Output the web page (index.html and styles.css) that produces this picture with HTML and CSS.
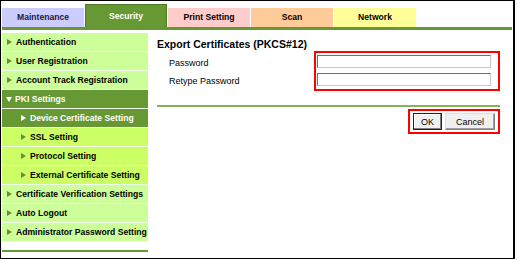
FILE: index.html
```html
<!DOCTYPE html>
<html lang="en">
<head>
  <meta charset="UTF-8" />
  <title>Export Certificates (PKCS#12)</title>
  <link rel="stylesheet" href="styles.css">
</head>
<body>
  <div class="frame">
    <div class="tabs">
      <div class="tab tab-maint">Maintenance</div>
      <div class="tab tab-security active">Security</div>
      <div class="tab tab-print">Print Setting</div>
      <div class="tab tab-scan">Scan</div>
      <div class="tab tab-network">Network</div>
    </div>
    <div class="tab-line"></div>

    <div class="content">
      <div class="side">
        <ul class="menu">
          <li class="item"><span class="arrow"></span>Authentication</li>
          <li class="item"><span class="arrow"></span>User Registration</li>
          <li class="item"><span class="arrow"></span>Account Track Registration</li>
          <li class="item open"><span class="arrow down"></span>PKI Settings</li>
          <li class="item sub current"><span class="arrow"></span>Device Certificate Setting</li>
          <li class="item sub"><span class="arrow"></span>SSL Setting</li>
          <li class="item sub"><span class="arrow"></span>Protocol Setting</li>
          <li class="item sub"><span class="arrow"></span>External Certificate Setting</li>
          <li class="item"><span class="arrow"></span>Certificate Verification Settings</li>
          <li class="item"><span class="arrow"></span>Auto Logout</li>
          <li class="item"><span class="arrow"></span>Administrator Password Setting</li>
        </ul>
        <div class="side-line"></div>
      </div>

      <div class="main">
        <h2>Export Certificates (PKCS#12)</h2>
        <div class="form-rows">
          <div class="labels">
            <label for="pw">Password</label>
            <label for="pw2">Retype Password</label>
          </div>
          <div class="highlight inputs">
            <input type="password" id="pw" />
            <input type="password" id="pw2" />
          </div>
        </div>
        <div class="main-line"></div>
        <div class="actions">
          <div class="highlight buttons">
            <button type="button" class="btn btn-ok">OK</button>
            <button type="button" class="btn btn-cancel">Cancel</button>
          </div>
        </div>
      </div>
    </div>
  </div>
</body>
</html>
```
FILE: styles.css
```css
body {
  margin: 0;
  background-color: #ffffff;
  font-family: 'Liberation Sans', Arial, sans-serif;
  color: #000;
}

.frame {
  box-sizing: border-box;
  width: 515px;
  height: 259px;
  border: 1px solid #000;
  border-right-width: 2px;
  padding-left: 1px;
  overflow: hidden;
}

/* tabs */
.tabs {
  display: flex;
  align-items: flex-end;
  height: 25px;
  padding-top: 1px;
}

.tab {
  box-sizing: border-box;
  width: 82px;
  height: 19px;
  margin-right: 1px;
  font-size: 8.6px;
  font-weight: bold;
  text-align: center;
  line-height: 19px;
  color: #000;
}

.tab-maint { background-color: #ccccff; color: #1a1a40; }
.tab-print { background-color: #ffcccc; }
.tab-scan { background-color: #ffcc99; }
.tab-network { background-color: #ffff99; }

.tab-security.active {
  height: 23px;
  line-height: 23px;
  background-color: #669933;
  border: 1px solid #4d7a26;
  border-bottom: none;
  color: #fff;
}

.tab-line {
  height: 3px;
  margin-right: 1px;
  background-color: #669933;
}

/* layout */
.content {
  display: flex;
  padding-top: 3px;
}

.side {
  width: 146px;
}

.menu {
  list-style: none;
  margin: 0;
  padding: 0;
}

.item {
  display: flex;
  align-items: center;
  height: 18px;
  border-bottom: 1px solid #f4fbe8;
  background-color: #ccff99;
  font-size: 8.6px;
  font-weight: bold;
  white-space: nowrap;
  overflow: hidden;
}

.arrow {
  width: 0;
  height: 0;
  margin: 0 4px 0 5px;
  border-left: 5px solid #72883f;
  border-top: 3.5px solid transparent;
  border-bottom: 3.5px solid transparent;
}

.arrow.down {
  margin: 0 3px 0 4px;
  border-left: 3.5px solid transparent;
  border-right: 3.5px solid transparent;
  border-top: 5px solid #fff;
  border-bottom: none;
}

.item.sub {
  background-color: #ccff66;
}

.item.sub .arrow {
  margin-left: 19px;
}

.item.open,
.item.current {
  background-color: #669933;
  color: #fff;
}

.item.current .arrow {
  border-left-color: #fff;
}

.side-line {
  height: 2px;
  margin-top: 8px;
  background-color: #669933;
}

/* main panel */
.main {
  flex: 1;
  margin-left: 9px;
  margin-right: 13px;
}

h2 {
  margin: 4px 0 0;
  font-size: 10.5px;
  line-height: 14px;
  color: #000;
}

.form-rows {
  display: flex;
  justify-content: space-between;
}

.labels {
  display: flex;
  flex-direction: column;
  padding-top: 3px;
  padding-left: 12px;
}

.labels label {
  height: 18px;
  line-height: 18px;
  font-size: 9px;
}

.highlight {
  border: 2px solid #ff0000;
}

.inputs {
  display: flex;
  flex-direction: column;
  gap: 5px;
  padding: 2px 7px 3px 1px;
}

.inputs input {
  box-sizing: border-box;
  width: 174px;
  height: 13px;
  margin: 0;
  padding: 0;
  border: 1px solid;
  border-color: #707070 #c8c8c8 #c8c8c8 #707070;
  background-color: #fff;
}

.main-line {
  height: 2px;
  margin-top: 14px;
  background-color: #88b05a;
}

.actions {
  display: flex;
  justify-content: flex-end;
  margin-top: 2px;
}

.buttons {
  display: flex;
  gap: 3px;
  padding: 2px 3px;
}

.btn {
  box-sizing: border-box;
  height: 17px;
  padding: 0;
  font-family: 'Liberation Sans', Arial, sans-serif;
  font-size: 9px;
  color: #000;
  background-color: #f0f0f0;
  border: 1px solid;
  border-color: #e0e0e0 #808080 #808080 #e0e0e0;
  box-shadow: inset -1px -1px 0 #a0a0a0;
}

.btn-ok {
  width: 29px;
  border: 1px solid #222;
  box-shadow: inset -1px -1px 0 #808080, inset 1px 1px 0 #fff;
}

.btn-cancel {
  width: 50px;
}
```
